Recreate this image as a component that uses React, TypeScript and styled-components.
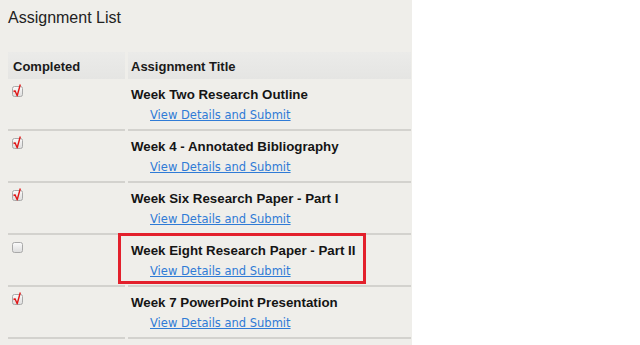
import React from "react";
import styled, { createGlobalStyle } from "styled-components";

const Global = createGlobalStyle`
  html, body { margin: 0; padding: 0; background: #ffffff; }
  body { font-family: "Liberation Sans", Arial, sans-serif; }
`;

const Panel = styled.div`
  width: 412px;
  height: 345px;
  background: #efeeea;
  padding: 0 0 0 8px;
  box-sizing: border-box;
  overflow: hidden;
`;

const Heading = styled.h1`
  margin: 0;
  padding-top: 9px;
  height: 52px;
  box-sizing: border-box;
  font-size: 16px;
  font-weight: normal;
  color: #222;
  line-height: 18px;
`;

const Grid = styled.div`
  display: grid;
  grid-template-columns: 117px 283px;
  column-gap: 3px;
`;

const HeadCell = styled.div<{ $pad: number }>`
  height: 27px;
  background: linear-gradient(#ebebe9, #e5e5e3);
  font-size: 13px;
  font-weight: bold;
  color: #1a1a1a;
  display: flex;
  align-items: center;
  padding-top: 1px;
  box-sizing: border-box;
  padding-left: ${(p) => p.$pad}px;
`;

const CheckCell = styled.div`
  height: 52px;
  border-bottom: 2px solid #d3d2ce;
  padding: 4px 0 0 4px;
  box-sizing: border-box;
`;

const TitleCell = styled.div`
  height: 52px;
  border-bottom: 2px solid #d3d2ce;
  box-sizing: border-box;
  position: relative;
`;

const Highlight = styled.div`
  position: absolute;
  left: -10px;
  top: -2px;
  width: 242px;
  height: 45px;
  border: 3px solid #e3202c;
`;

const Title = styled.div`
  padding: 8px 0 0 3px;
  font-size: 13.3px;
  font-weight: bold;
  color: #151515;
  line-height: 16px;
`;

const Link = styled.a`
  display: inline-block;
  margin: 5px 0 0 22px;
  font-family: "DejaVu Sans", Verdana, sans-serif;
  font-size: 11.5px;
  color: #2f7bd6;
  text-decoration: underline;
  line-height: 15px;
  cursor: pointer;
`;

const Box = styled.svg`
  display: block;
`;

function Check({ checked }: { checked: boolean }) {
  return (
    <Box width="14" height="16" viewBox="0 0 14 16">
      <defs>
        <linearGradient id="cb" x1="0" y1="0" x2="0" y2="1">
          <stop offset="0" stopColor="#fbfbfb" />
          <stop offset="1" stopColor="#dcdcdc" />
        </linearGradient>
      </defs>
      <rect x="0.5" y="3.5" width="10" height="10" rx="2" fill="url(#cb)" stroke="#a9a9a9" />
      {checked && (
        <path d="M1.5 8.5 L3 7.8 L5.2 12.8 L8.3 1.5" fill="none" stroke="#e01818" strokeWidth="1.4" strokeLinejoin="round" />
      )}
    </Box>
  );
}

const rows = [
  { title: "Week Two Research Outline", done: true },
  { title: "Week 4 - Annotated Bibliography", done: true },
  { title: "Week Six Research Paper - Part I", done: true },
  { title: "Week Eight Research Paper - Part II", done: false, hl: true },
  { title: "Week 7 PowerPoint Presentation", done: true },
];

export default function App() {
  return (
    <>
      <Global />
      <Panel>
        <Heading>Assignment List</Heading>
        <Grid>
          <HeadCell $pad={5}>Completed</HeadCell>
          <HeadCell $pad={3}>Assignment Title</HeadCell>
          {rows.map((r) => (
            <React.Fragment key={r.title}>
              <CheckCell>
                <Check checked={r.done} />
              </CheckCell>
              <TitleCell>
                {r.hl && <Highlight />}
                <Title>{r.title}</Title>
                <Link>View Details and Submit</Link>
              </TitleCell>
            </React.Fragment>
          ))}
        </Grid>
      </Panel>
    </>
  );
}
